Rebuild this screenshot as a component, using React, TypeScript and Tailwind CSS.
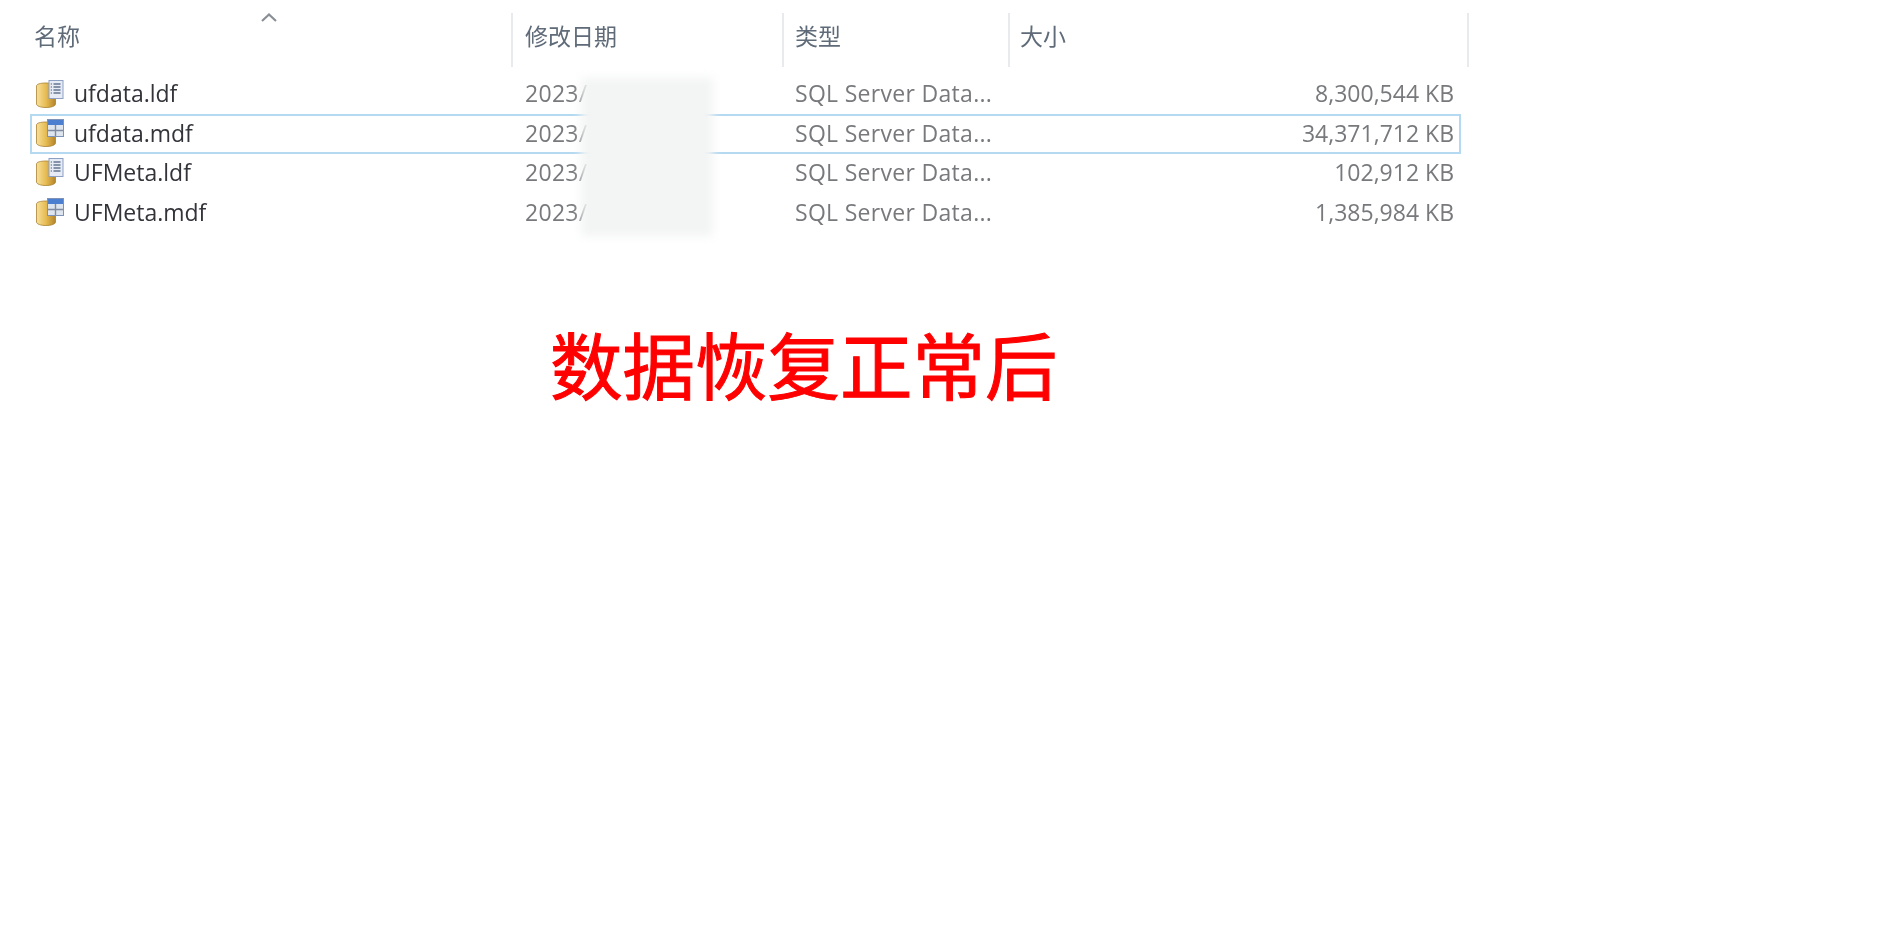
const files = [
  { name: 'ufdata.ldf', kind: 'log', size: '8,300,544 KB' },
  { name: 'ufdata.mdf', kind: 'data', size: '34,371,712 KB', selected: true },
  { name: 'UFMeta.ldf', kind: 'log', size: '102,912 KB' },
  { name: 'UFMeta.mdf', kind: 'data', size: '1,385,984 KB' },
]

const columns = [
  { label: '名称', className: 'w-[483px] pl-[4px]' },
  { label: '修改日期', className: 'w-[271px] pl-[12px]' },
  { label: '类型', className: 'w-[226px] pl-[11px]' },
  { label: '大小', className: 'w-[459px] pl-[10px]' },
]

function FileIcon({ kind }: { kind: string }) {
  return (
    <svg viewBox="0 0 28 28" className="h-[28px] w-[28px] shrink-0 blur-[0.4px]">
      <defs>
        <linearGradient id="barrel" x1="0" x2="1" y1="0" y2="0">
          <stop offset="0" stopColor="#f8e09a" />
          <stop offset="0.5" stopColor="#e6bb52" />
          <stop offset="1" stopColor="#b4842a" />
        </linearGradient>
      </defs>
      <path d="M0.500 6c0-2 4-3 9.500-3s9.500 1 9.500 3v18c0 2-4 3.500-9.500 3.500s-9.500-1.500-9.500-3.500z" fill="url(#barrel)" stroke="#a98232" strokeWidth="0.8" />
      {kind === 'log' ? (
        <g>
          <rect x="13" y="0.500" width="14" height="18" fill="#e6ebf6" stroke="#8ea0c4" />
          <path d="M17.500 4h7M17.500 7h7M17.500 10h7M17.500 13h7" stroke="#66758f" strokeWidth="1.300" />
          <path d="M14.800 4h1M14.800 7h1M14.800 10h1M14.800 13h1" stroke="#66758f" strokeWidth="1.300" />
        </g>
      ) : (
        <g>
          <rect x="11.500" y="0.500" width="16" height="17" fill="#dfe5ef" stroke="#7f93b8" />
          <rect x="12" y="1" width="15" height="5" fill="#4c7fd0" />
          <path d="M19.500 6v11M12 11.500h15" stroke="#7f8ba0" strokeWidth="1.400" />
        </g>
      )}
    </svg>
  )
}

export default function App() {
  return (
    <div className="min-h-screen bg-white font-['Open_Sans','Noto_Sans_CJK_SC',sans-serif]">
      <div className="relative ml-[30px] w-[1440px]">
        {/* Column headers */}
        <div className="flex h-[75px] pb-[8px] pt-[13px]">
          {columns.map((col) => (
            <div
              key={col.label}
              className={`flex items-center border-r-2 border-[#e8eaed] pb-[8px] text-[23px] text-[#5f6b78] blur-[0.5px] ${col.className}`}
            >
              {col.label}
            </div>
          ))}
        </div>

        <svg viewBox="0 0 16 9" className="absolute left-[231px] top-[13px] h-[9px] w-[16px]">
          <path d="M1 8l7-6.500 7 6.500" fill="none" stroke="#8a8f96" strokeWidth="2.200" />
        </svg>

        {/* File rows */}
        <div className="w-[1431px]">
          {files.map((file) => (
            <div
              key={file.name}
              className={`flex h-[39.4px] items-center border-2 pb-[2px] ${
                file.selected ? 'border-[#b5d9f0]' : 'border-transparent'
              }`}
            >
              <div className="flex w-[480px] items-center gap-[10px] pl-[4px]">
                <FileIcon kind={file.kind} />
                <span className="text-[23px] text-[#33343a] blur-[0.5px]">{file.name}</span>
              </div>
              <div className="w-[271px] pl-[13px] text-[23px] tracking-[0.3px] text-[#77797c] blur-[0.5px]">2023/</div>
              <div className="w-[226px] pl-[12px] text-[23px] tracking-[0.3px] text-[#77797c] blur-[0.5px]">SQL Server Data...</div>
              <div className="flex-1 pr-[5px] text-right text-[23px] text-[#77797c] blur-[0.5px]">{file.size}</div>
            </div>
          ))}
        </div>

        {/* Blurred-out date column */}
        <div className="absolute left-[551px] top-[78px] h-[158px] w-[132px] bg-[#f3f4f4] blur-[5px]" />
      </div>

      <div className="mt-[94px] pl-[550px] font-['Noto_Sans_CJK_SC',sans-serif] text-[72.5px] leading-[72px] text-[#ff0000] [-webkit-text-stroke:1px_#ff0000]">
        数据恢复正常后
      </div>
    </div>
  )
}
